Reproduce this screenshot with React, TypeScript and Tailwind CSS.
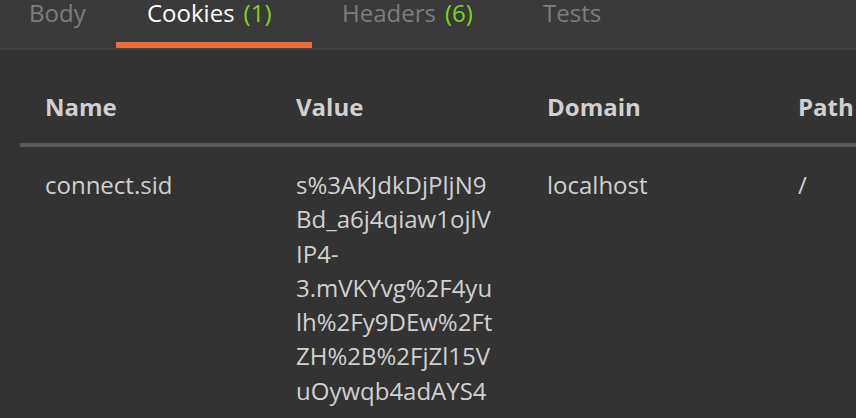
import React from "react";

const font = { fontFamily: '"Open Sans", "Noto Sans", sans-serif' };

function Tab({
  label,
  count,
  active,
  className,
}: {
  label: string;
  count?: number;
  active?: boolean;
  className: string;
}) {
  return (
    <div className={`relative h-[48px] shrink-0 pt-[1px] ${className}`}>
      <div className="text-[24px] leading-[24px] whitespace-nowrap">
        <span className={active ? "text-white" : "text-[#7d7d7d]"}>{label}</span>
        {count !== undefined && (
          <span className="ml-[9px] text-[#7ed321]">({count})</span>
        )}
      </div>
      {active && (
        <div className="absolute left-0 right-0 bottom-0 h-[6px] bg-[#f26b3a]" />
      )}
    </div>
  );
}

const value =
  "s%3AKJdkDjPljN9Bd_a6j4qiaw1ojlVIP4-3.mVKYvg%2F4yulh%2Fy9DEw%2FtZH%2B%2FjZl15VuOywqb4adAYS4";

export default function App() {
  return (
    <div className="w-[856px] h-[418px] overflow-hidden bg-[#333333]" style={font}>
      <div className="flex h-[48px] bg-[#3a3a3a]">
        <Tab label="Body" className="w-[116px] pl-[29px]" />
        <Tab label="Cookies" count={1} active className="w-[196px] pl-[31px]" />
        <Tab label="Headers" count={6} className="w-[200px] pl-[30px]" />
        <Tab label="Tests" className="pl-[31px]" />
      </div>
      <div className="h-[2px] bg-[#404040]" />
      <div className="pl-[20px]">
        <div className="flex border-b-[4px] border-[#595959] h-[97px] items-start pt-[40px] w-[1100px]">
          {["Name", "Value", "Domain", "Path"].map((h) => (
            <div
              key={h}
              className="w-[251px] shrink-0 pl-[25px] text-[24px] font-bold leading-[34px] text-[#d0d0d0]"
            >
              {h}
            </div>
          ))}
        </div>
        <div className="flex pt-[21px] text-[24px] leading-[34.3px] text-[#d0d0d0]">
          <div className="w-[251px] shrink-0 pl-[25px]">connect.sid</div>
          <div className="w-[251px] shrink-0 pl-[25px] pr-[29px] break-words">{value}</div>
          <div className="w-[251px] shrink-0 pl-[25px]">localhost</div>
          <div className="w-[251px] shrink-0 pl-[25px]">/</div>
        </div>
      </div>
    </div>
  );
}
